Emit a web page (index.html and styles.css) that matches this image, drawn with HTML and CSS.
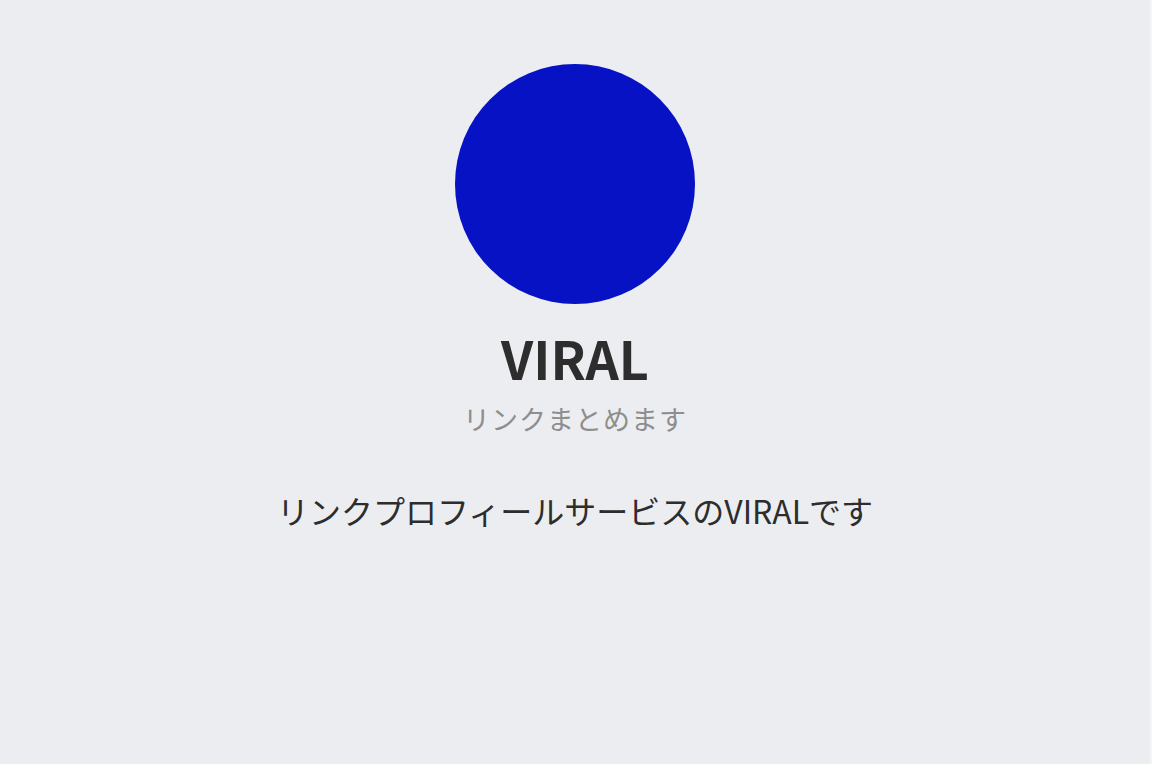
FILE: index.html
```html
<!DOCTYPE html>
<html lang="ja">
<head>
<meta charset="utf-8">
<title>VIRAL</title>
<link rel="stylesheet" href="styles.css">
</head>
<body>
<main class="page">
  <div class="avatar"></div>
  <h1 class="title">VIRAL</h1>
  <p class="subtitle">リンクまとめます</p>
  <p class="desc">リンクプロフィールサービスのVIRALです</p>
</main>
</body>
</html>
```
FILE: styles.css
```css
html, body {
  margin: 0;
  padding: 0;
  height: 100%;
}
body {
  background: #ecedf0;
  font-family: "Noto Sans CJK JP", "Noto Sans", sans-serif;
  color: #2d2d2d;
}
.page {
  box-sizing: border-box;
  height: 100%;
  border-right: 2px solid #f4f4f6;
  display: flex;
  flex-direction: column;
  align-items: center;
  padding-top: 64px;
}
.avatar {
  width: 240px;
  height: 240px;
  border-radius: 50%;
  background: #0612c4;
}
.title {
  margin: 22px 0 0;
  font-size: 52px;
  line-height: 64px;
  font-weight: 700;
  color: #2d2d2d;
}
.subtitle {
  margin: 13px 0 0;
  font-size: 27px;
  line-height: 32px;
  color: #8e8e8e;
  letter-spacing: 1px;
}
.desc {
  margin: 55px 0 0;
  font-size: 32px;
  line-height: 40px;
  color: #2d2d2d;
}
```
